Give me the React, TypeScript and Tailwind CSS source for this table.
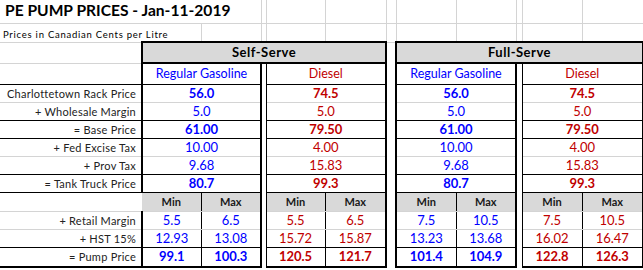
const single = [
   { label: "Charlottetown Rack Price", v: ["56.0", "74.5", "56.0", "74.5"], bold: true, line: "gray" },
   { label: "+ Wholesale Margin", v: ["5.0", "5.0", "5.0", "5.0"], bold: false, line: "black" },
   { label: "= Base Price", v: ["61.00", "79.50", "61.00", "79.50"], bold: true, line: "black" },
   { label: "+ Fed Excise Tax", v: ["10.00", "4.00", "10.00", "4.00"], bold: false, line: "gray" },
   { label: "+ Prov Tax", v: ["9.68", "15.83", "9.68", "15.83"], bold: false, line: "black" },
   { label: "= Tank Truck Price", v: ["80.7", "99.3", "80.7", "99.3"], bold: true, line: "black" },
];

const pairs = [
   { label: "+ Retail Margin", v: ["5.5", "6.5", "5.5", "6.5", "7.5", "10.5", "7.5", "10.5"], bold: false, line: "gray" },
   { label: "+ HST 15%", v: ["12.93", "13.08", "15.72", "15.87", "13.23", "13.68", "16.02", "16.47"], bold: false, line: "black" },
   { label: "= Pump Price", v: ["99.1", "100.3", "120.5", "121.7", "101.4", "104.9", "122.8", "126.3"], bold: true, line: "thick" },
];

const lines: Record<string, string> = {
   gray: "border-b border-b-[#d4d4d4]",
   black: "border-b border-b-black",
   thick: "border-b-2 border-b-black",
};

const blue = "text-[#0000ff]";
const red = "text-[#c00000]";
const label = "pr-[5px] text-right text-[11px] tracking-[0.25px] text-[#222] whitespace-nowrap";
const grid = "border-r border-r-[#d4d4d4] border-b border-b-[#d4d4d4]";

function Cols() {
   return (
      <colgroup>
         <col className="w-[142px]" />
         <col className="w-[59px]" />
         <col className="w-[60px]" />
         <col className="w-[5px]" />
         <col className="w-[59px]" />
         <col className="w-[61px]" />
         <col className="w-[10px]" />
         <col className="w-[60px]" />
         <col className="w-[60px]" />
         <col className="w-[6px]" />
         <col className="w-[60px]" />
         <col className="w-[61px]" />
      </colgroup>
   );
}

export default function App() {
   return (
      <div className="w-[643px] h-[270px] overflow-hidden bg-white">
         <table className="w-[643px] table-fixed border-collapse font-['Lato','Liberation_Sans',sans-serif] leading-none">
            <Cols />
            <tbody>
               <tr className="h-[23px]">
                  <td colSpan={3} className={`${grid} pl-[5px] text-[15.6px] font-bold text-black whitespace-nowrap`}>
                     PE PUMP PRICES - Jan-11-2019
                  </td>
                  <td className={grid} />
                  <td className={grid} />
                  <td className={grid} />
                  <td className={grid} />
                  <td className={grid} />
                  <td className={grid} />
                  <td className={grid} />
                  <td className={grid} />
                  <td className={grid} />
               </tr>
               <tr className="h-[19px]">
                  <td colSpan={2} className={`${grid} pl-[3px] pt-[4px] text-[9.5px] tracking-[0.75px] text-black whitespace-nowrap`}>
                     Prices in Canadian Cents per Litre
                  </td>
                  <td className={grid} />
                  <td className={grid} />
                  <td className={grid} />
                  <td className={grid} />
                  <td className={grid} />
                  <td className={grid} />
                  <td className={grid} />
                  <td className={grid} />
                  <td className={grid} />
               </tr>
               <tr className="h-[21px]">
                  <td className="border-b border-b-[#d4d4d4]" />
                  <td colSpan={5} className="border-2 border-black bg-[#d9d9d9] text-center text-[13px] font-bold tracking-[0.5px] text-black">
                     Self-Serve
                  </td>
                  <td />
                  <td colSpan={5} className="border-2 border-black bg-[#d9d9d9] text-center text-[13px] font-bold tracking-[0.5px] text-black">
                     Full-Serve
                  </td>
               </tr>
               <tr className="h-[21px]">
                  <td className="border-b border-b-black" />
                  <td colSpan={2} className={`border-l-2 border-l-black border-r-2 border-r-black border-b border-b-black text-center text-[12.5px] ${blue}`}>
                     Regular Gasoline
                  </td>
                  <td className="border-r border-r-black" />
                  <td colSpan={2} className={`border-r-2 border-r-black border-b border-b-black text-center text-[12.5px] ${red}`}>
                     Diesel
                  </td>
                  <td className="border-r-2 border-r-black" />
                  <td colSpan={2} className={`border-r-2 border-r-black border-b border-b-black text-center text-[12.5px] ${blue}`}>
                     Regular Gasoline
                  </td>
                  <td className="border-r border-r-black" />
                  <td colSpan={2} className={`border-r-2 border-r-black border-b border-b-black text-center text-[12.5px] ${red}`}>
                     Diesel
                  </td>
               </tr>
               {single.map((row) => {
                  const b = lines[row.line];
                  const w = row.bold ? "font-bold" : "";
                  return (
                     <tr key={row.label} className="h-[18px]">
                        <td className={`${label} ${b}`}>{row.label}</td>
                        <td colSpan={2} className={`border-l-2 border-l-black border-r-2 border-r-black text-center text-[13px] ${b} ${blue} ${w}`}>
                           {row.v[0]}
                        </td>
                        <td className="border-r border-r-black" />
                        <td colSpan={2} className={`border-r-2 border-r-black text-center text-[13px] ${b} ${red} ${w}`}>
                           {row.v[1]}
                        </td>
                        <td className="border-r-2 border-r-black" />
                        <td colSpan={2} className={`border-r-2 border-r-black text-center text-[13px] ${b} ${blue} ${w}`}>
                           {row.v[2]}
                        </td>
                        <td className="border-r border-r-black" />
                        <td colSpan={2} className={`border-r-2 border-r-black text-center text-[13px] ${b} ${red} ${w}`}>
                           {row.v[3]}
                        </td>
                     </tr>
                  );
               })}
               <tr className="h-[19px]">
                  <td className="border-b border-b-[#d4d4d4]" />
                  {["a", "b", "c", "d"].map((k, i) => (
                     <MinMax key={k} last={i} />
                  ))}
               </tr>
               {pairs.map((row, n) => {
                  const b = lines[row.line];
                  const w = row.bold ? "font-bold" : "";
                  return (
                     <tr key={row.label} className={n === 2 ? "h-[20px]" : "h-[18px]"}>
                        <td className={`${label} ${b}`}>{row.label}</td>
                        <td className={`border-l-2 border-l-black border-r border-r-black text-center text-[13px] ${b} ${blue} ${w}`}>{row.v[0]}</td>
                        <td className={`border-r-2 border-r-black text-center text-[13px] ${b} ${blue} ${w}`}>{row.v[1]}</td>
                        <td className="border-r border-r-black" />
                        <td className={`border-r border-r-black text-center text-[13px] ${b} ${red} ${w}`}>{row.v[2]}</td>
                        <td className={`border-r-2 border-r-black text-center text-[13px] ${b} ${red} ${w}`}>{row.v[3]}</td>
                        <td className="border-r-2 border-r-black" />
                        <td className={`border-r border-r-black text-center text-[13px] ${b} ${blue} ${w}`}>{row.v[4]}</td>
                        <td className={`border-r-2 border-r-black text-center text-[13px] ${b} ${blue} ${w}`}>{row.v[5]}</td>
                        <td className="border-r border-r-black" />
                        <td className={`border-r border-r-black text-center text-[13px] ${b} ${red} ${w}`}>{row.v[6]}</td>
                        <td className={`border-r-2 border-r-black text-center text-[13px] ${b} ${red} ${w}`}>{row.v[7]}</td>
                     </tr>
                  );
               })}
            </tbody>
         </table>
      </div>
   );
}

function MinMax({ last }: { last: number }) {
   const gap = last === 1 ? "border-r-2 border-r-black" : last === 3 ? "" : "border-r border-r-black";
   return (
      <>
         <td className="border-r border-r-black border-b border-b-[#d4d4d4] bg-[#d9d9d9] text-center text-[11px] font-bold text-[#1a1a1a]">
            Min
         </td>
         <td className="border-r-2 border-r-black border-b border-b-[#d4d4d4] bg-[#d9d9d9] text-center text-[11px] font-bold text-[#1a1a1a]">
            Max
         </td>
         {last !== 3 && <td className={gap} />}
      </>
   );
}
